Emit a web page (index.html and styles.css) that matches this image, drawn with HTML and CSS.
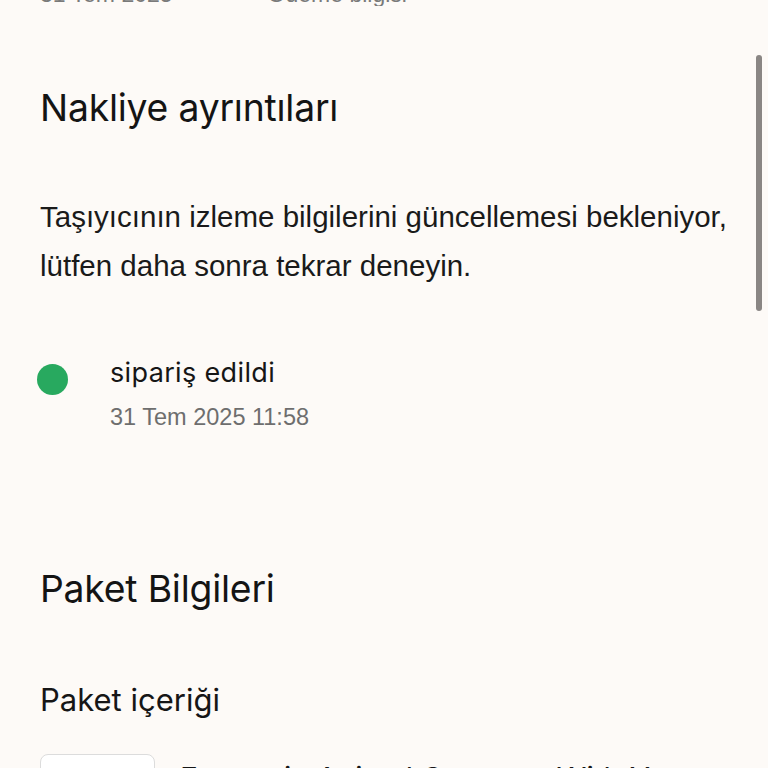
FILE: index.html
```html
<!DOCTYPE html>
<html lang="tr"><head><meta charset="utf-8"><link rel="stylesheet" href="styles.css"></head>
<body>
<div class="prev"><div class="prev-in"><span>31 Tem 2025</span><span>Ödeme bilgisi</span></div></div>
<main class="page">
  <h1 class="title">Nakliye ayrıntıları</h1>
  <p class="note">Taşıyıcının izleme bilgilerini güncellemesi bekleniyor, lütfen daha sonra tekrar deneyin.</p>
  <div class="event">
    <span class="dot"></span>
    <div class="event-text">
      <div class="event-name">sipariş edildi</div>
      <div class="event-date">31 Tem 2025 11:58</div>
    </div>
  </div>
  <h2 class="title title-pkg">Paket Bilgileri</h2>
  <h3 class="sub">Paket içeriği</h3>
  <div class="item">
    <div class="thumb"></div>
    <div class="item-name">Fantastic Animal Costume With Y</div>
  </div>
</main>
<div class="scrollbar"></div>
</body></html>
```
FILE: styles.css
```css
html,body{margin:0;padding:0;background:#fdfaf7;}
body{height:768px;overflow:hidden;}
.prev{height:6px;overflow:hidden;padding:0 40px;}
.prev-in{display:flex;gap:95px;margin-top:-19px;font-family:"Liberation Sans",Arial,sans-serif;font-size:23px;line-height:26px;color:#7a7a7a;}
.page{padding:0 40px;}
.title{margin:79px 0 0;font-family:Inter,sans-serif;font-weight:400;font-size:37.3px;line-height:46px;color:#141414;letter-spacing:-0.2px;}
.note{margin:61px 0 0;font-family:"Liberation Sans",Arial,sans-serif;font-size:29.5px;line-height:49px;color:#1a1a1a;}
.event{display:flex;align-items:flex-start;margin-top:66px;}
.dot{width:31px;height:31px;border-radius:50%;background:#28a95f;margin:8px 0 0 -3px;flex:none;}
.event-text{margin-left:42px;}
.event-name{font-family:Inter,sans-serif;font-size:27px;line-height:34px;letter-spacing:0.35px;color:#161616;}
.event-date{margin-top:12px;font-family:"Liberation Sans",Arial,sans-serif;font-size:23.5px;line-height:30px;color:#6e6e6e;}
.title-pkg{margin-top:134px;}
.sub{margin:70px 0 0;font-family:Inter,sans-serif;font-weight:400;font-size:31px;line-height:36px;color:#161616;}
.item{display:flex;gap:25px;margin-top:36px;}
.thumb{width:113px;height:110px;border:1.5px solid #dcdcdc;border-radius:8px;flex:none;background:#fff;}
.item-name{margin-top:6px;font-family:Inter,sans-serif;font-size:30px;line-height:36px;color:#161616;}
.scrollbar{position:fixed;right:6px;top:55px;width:6px;height:256px;border-radius:3px;background:#8a8684;}
```
